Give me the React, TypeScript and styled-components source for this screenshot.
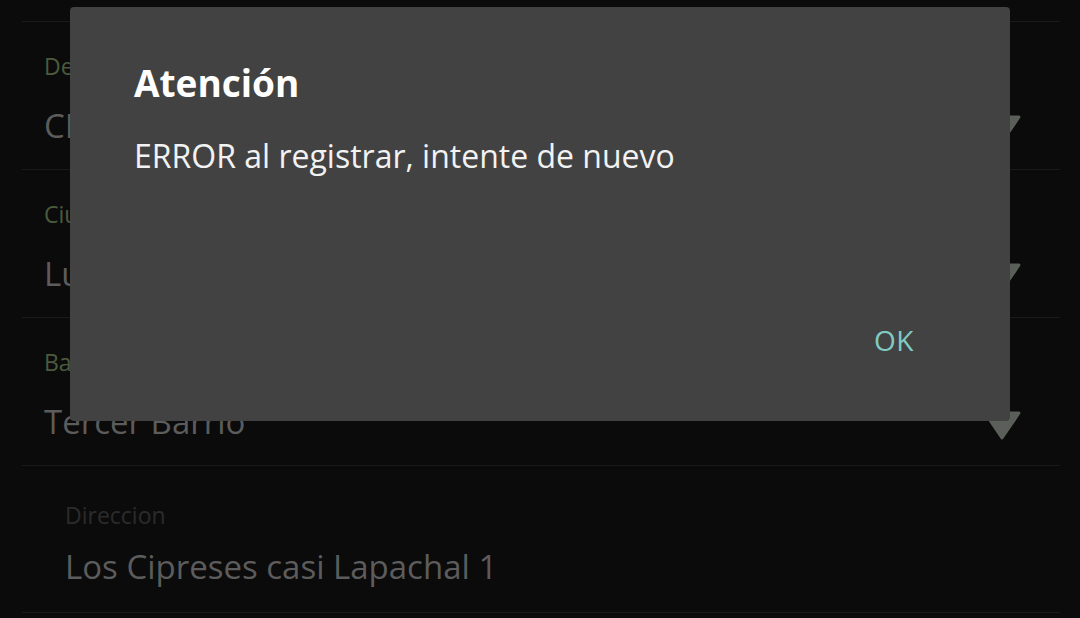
import styled, { createGlobalStyle } from 'styled-components';

const Global = createGlobalStyle`
  html, body { margin: 0; padding: 0; background: #0b0b0b; }
  body { font-family: "Open Sans", "Noto Sans", sans-serif; overflow: hidden; }
  #root { width: 1080px; height: 618px; position: relative; }
`;

const Screen = styled.div`
  width: 1080px;
  height: 618px;
  background: #0b0b0b;
  position: relative;
  overflow: hidden;
`;

const Form = styled.div`
  padding: 21px 20px 0 22px;
`;

const Row = styled.div<{ $indent?: boolean }>`
  height: 147px;
  border-top: 1px solid #1a1a1a;
  padding-left: ${p => (p.$indent ? 43 : 22)}px;
  padding-right: 38px;
  &:last-child { border-bottom: 1px solid #1a1a1a; height: 146px; }
`;

const Label = styled.div<{ $dim?: boolean }>`
  font-size: 23px;
  line-height: 32px;
  padding-top: ${p => (p.$dim ? 33 : 28)}px;
  color: ${p => (p.$dim ? '#2b2b2b' : '#4b5b3d')};
`;

const ValueLine = styled.div<{ $gap?: number }>`
  display: flex;
  align-items: center;
  justify-content: space-between;
  height: 60px;
  margin-top: ${p => p.$gap ?? 13}px;
`;

const Value = styled.span`
  font-size: 33px;
  color: #5c5c5c;
  white-space: nowrap;
`;

const Caret = styled.svg`
  width: 40px;
  height: 30px;
  margin-top: 10px;
  flex: none;
`;

const Dialog = styled.div`
  position: absolute;
  left: 70px;
  top: 7px;
  width: 940px;
  height: 414px;
  box-sizing: border-box;
  background: #424242;
  border-radius: 4px;
  padding: 52px 64px 0;
  display: flex;
  flex-direction: column;
`;

const Title = styled.h2`
  margin: 0;
  font-size: 37px;
  line-height: 48px;
  font-weight: 700;
  color: #ffffff;
`;

const Message = styled.p`
  margin: 29px 0 0;
  font-size: 32px;
  line-height: 40px;
  color: #f2f2f2;
`;

const Actions = styled.div`
  margin-top: auto;
  display: flex;
  justify-content: flex-end;
  padding: 0 32px 63px 0;
`;

const Button = styled.button`
  background: none;
  border: 0;
  padding: 0;
  font-family: inherit;
  font-size: 28px;
  line-height: 36px;
  font-weight: 500;
  color: #80cbc4;
  letter-spacing: 0.5px;
`;

const Triangle = () => (
  <Caret viewBox="0 0 40 30">
    <path d="M3 2 L37 2 L20 27 Z" fill="#5b5f59" stroke="#5b5f59" strokeWidth="3" strokeLinejoin="round" />
  </Caret>
);

const fields = [
  { label: 'Departamento', value: 'CENTRAL' },
  { label: 'Ciudad', value: 'Luque' },
  { label: 'Barrio', value: 'Tercer Barrio' },
];

export default function App() {
  return (
    <Screen>
      <Global />
      <Form>
        {fields.map(f => (
          <Row key={f.label}>
            <Label>{f.label}</Label>
            <ValueLine>
              <Value>{f.value}</Value>
              <Triangle />
            </ValueLine>
          </Row>
        ))}
        <Row $indent>
          <Label $dim>Direccion</Label>
          <ValueLine $gap={5}>
            <Value>Los Cipreses casi Lapachal 1</Value>
          </ValueLine>
        </Row>
      </Form>
      <Dialog>
        <Title>Atención</Title>
        <Message>ERROR al registrar, intente de nuevo</Message>
        <Actions>
          <Button>OK</Button>
        </Actions>
      </Dialog>
    </Screen>
  );
}
